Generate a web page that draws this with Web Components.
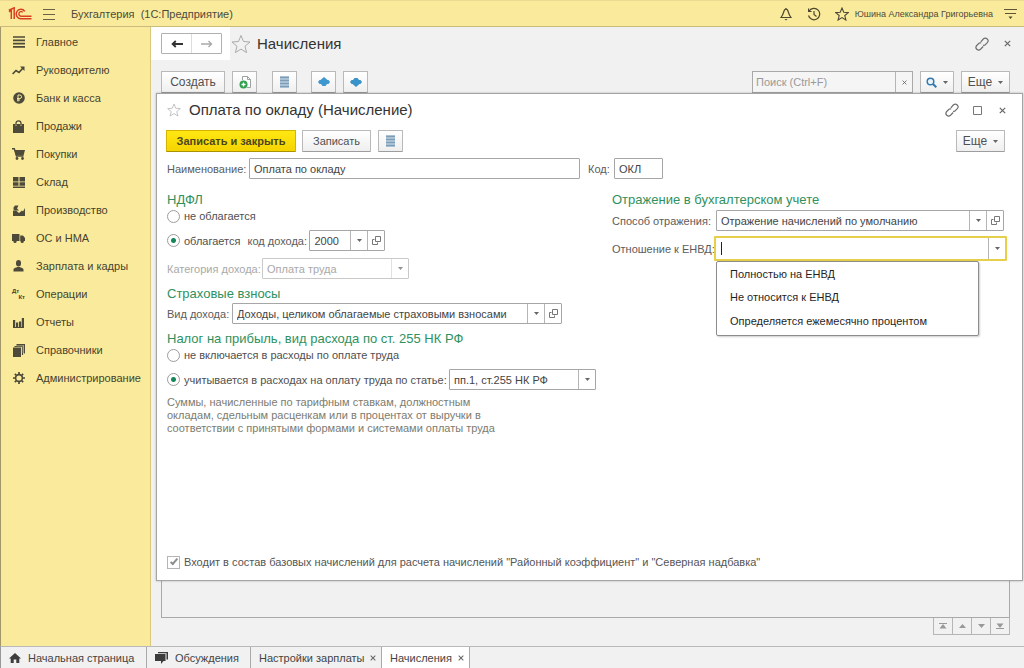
<!DOCTYPE html>
<html lang="ru">
<head>
<meta charset="utf-8">
<meta name="viewport" content="width=device-width, initial-scale=1">
<title>Бухгалтерия (1С:Предприятие)</title>
<style>
  body { margin: 0; font: 11px/16px "Liberation Sans", Arial, sans-serif; color: #4a4a4a; background: #f1f1f1; }
</style>
</head>
<body>
<app-shell></app-shell>

<script>
const RESET = `
  *, *::before, *::after { box-sizing: border-box; }
  :host { display: block; box-sizing: border-box; }
  :host([hidden]) { display: none; }
  button, input, select { font: inherit; color: inherit; margin: 0; padding: 0; border: 0; border-radius: 0; background: none; outline: none; appearance: none; }
  button { display: inline-flex; align-items: center; justify-content: center; cursor: pointer; }
  a { color: inherit; text-decoration: none; }
  ul { list-style: none; margin: 0; padding: 0; }
  h1, h2, p { margin: 0; font-weight: normal; }
`;

function define(name, css, html, ready) {
  customElements.define(name, class extends HTMLElement {
    connectedCallback() {
      if (this.shadowRoot) return;
      const root = this.attachShadow({ mode: 'open' });
      const markup = typeof html === 'function' ? html(this) : html;
      root.innerHTML = `<style>${RESET}${css}</style>${markup}`;
      if (ready) ready(root, this);
    }
  });
}

const ICONS = {
  logo: [24, 14, `<g fill="none" stroke="#d8401f"><path d="M1 4.800 3.300 3.200V12M.8 3.200 6.200.8V12" stroke-width="1.500"/><path d="M16.800 4.400A4.700 4.700 0 1 0 12.800 11.700H23.500" stroke-width="1.500"/><path d="M14.800 5.300A2.300 2.300 0 1 0 13 9.200H23.500" stroke-width="1.400"/></g>`],
  menu: [12, 11, `<path d="M0 .5h12M0 5.5h12M0 10.5h12" stroke="#6a6244"/>`],
  bell: [12, 14, `<path d="M6 1v1M1 10.500h10C9.500 8.500 9 7.500 8.300 5 7.800 3.200 7 2.200 6 2.200S4.200 3.200 3.700 5C3 7.500 2.500 8.500 1 10.500z" fill="none" stroke="#4d4730" stroke-width="1.200"/><path d="M4.500 12h3L6 13.500z" fill="#4d4730"/>`],
  history: [14, 14, `<path d="M2.200 4A5.700 5.700 0 1 1 1.500 8.500M1.600 1.500v3h3M7 4v3.500L9.500 9.500" fill="none" stroke="#4d4730" stroke-width="1.200"/>`],
  star: [20, 20, `<path d="M10 1.500 12.500 7.500 19 8 14 12.200 15.600 18.600 10 15.100 4.400 18.600 6 12.200 1 8 7.500 7.500z" fill="none" stroke="currentColor" stroke-width="var(--stroke, 1)"/>`],
  dropmenu: [13, 12, `<path d="M0 1.500h13M1 5.500h11" stroke="#5b5439"/><path d="M4.500 8.500h4L6.500 11z" fill="#4d4730"/>`],
  link: [14, 14, `<g fill="none" stroke="#6e6e6e" stroke-width="1.200"><path d="M5.800 4.800 8.300 2Q10.300.200 12.200 2T12.300 5.700L9.800 8.200 8 8.400"/><path d="M6.200 5.800 4.200 6 1.700 8.500Q0 10.500 1.800 12.200T5.500 12.200L8.200 9.500"/></g>`],
  close: [7, 7, `<path d="M.8.8 6.200 6.200M6.200.8.800 6.200" stroke="#666" stroke-width="1.200"/>`],
  square: [9, 9, `<path d="M.5.500h8v8h-8z" fill="none" stroke="#777"/>`],
  back: [12, 8, `<path d="M12 4H2M4.800 1 1.600 4l3.200 3" fill="none" stroke="#333" stroke-width="1.800"/>`],
  forward: [12, 8, `<path d="M0 4h10.500M7.500 1l3 3-3 3" fill="none" stroke="#aaa" stroke-width="1.400"/>`],
  list: [9, 12, `<path d="M0 0h9v12H0z" fill="#a9c1d3"/><path d="M0 1.500h9M0 4.500h9M0 7.500h9M0 10.500h9" stroke="#7b9db8"/>`],
  addcopy: [12, 13, `<path d="M3.500 4V.500h5l3 3v8H8" fill="#fff" stroke="#9aa39f"/><path d="M8.500.500v3h3" fill="none" stroke="#9aa39f"/><circle cx="4.500" cy="8.500" r="4" fill="#2fa04e"/><path d="M2.500 8.500h4M4.500 6.500v4" stroke="#fff" stroke-width="1.300"/>`],
  up: [12, 10, `<path d="M6 0 9.500 3H10.500L12 5 10.500 7H9L7.500 9h-3L3 7H1.500L0 5 1.500 3H2.500z" fill="#3f97cf"/>`],
  down: [12, 10, `<path d="M6 10 9.500 7H10.500L12 5 10.500 3H9L7.500 1h-3L3 3H1.500L0 5 1.500 7H2.500z" fill="#3a93c8"/>`],
  lens: [11, 11, `<circle cx="4.500" cy="4.500" r="3.300" fill="#eaf4fb" stroke="#3479b0" stroke-width="1.500"/><path d="M7 7l3.300 3.300" stroke="#3479b0" stroke-width="2"/>`],
  caret: [5, 3, `<path d="M0 0h5L2.500 3z" fill="#666"/>`],
  open: [9, 9, `<path d="M3.500.500h5v5h-5z" fill="none" stroke="#777"/><path d="M2.500 3.500h-2v5h5v-2" fill="none" stroke="#777"/>`],
  main: [12, 12, `<path d="M0 1h12M0 4.300h12M0 7.600h12M0 10.900h12" stroke="#4d4a3a" stroke-width="1.700"/>`],
  trend: [13, 9, `<path d="M.6 8 4 4.500l3 2L11 2" fill="none" stroke="#4d4a3a" stroke-width="1.700"/><path d="M8 .500h4.500V5z" fill="#4d4a3a"/>`],
  ruble: [12, 12, `<circle cx="6" cy="6" r="5.800" fill="#4d4a3a"/><path d="M5 9.500V3h1.800a1.700 1.700 0 0 1 0 3.500H4M4 8h3" fill="none" stroke="#faeb9c"/>`],
  bag: [11, 13, `<path d="M0 4h11v9H0z" fill="#4d4a3a"/><path d="M3 6V3.300a2.500 2.500 0 0 1 5 0V6" fill="none" stroke="#4d4a3a" stroke-width="1.300"/><path d="M3 4.500v1.500M8 4.500v1.500" stroke="#faeb9c" stroke-width=".8"/>`],
  cart: [13, 12, `<path d="M0 .800h2.300L4.500 8h7" fill="none" stroke="#4d4a3a" stroke-width="1.400"/><path d="M2.500 2H13l-1.500 5.500H4z" fill="#4d4a3a"/><circle cx="5" cy="10.500" r="1.400" fill="#4d4a3a"/><circle cx="10.500" cy="10.500" r="1.400" fill="#4d4a3a"/>`],
  store: [12, 11, `<path d="M0 0h5.500v4.500H0zM6.500 0H12v4.500H6.500zM0 5.300h5.500v3.500H0zM6.500 5.300H12v3.500H6.500zM0 9.600h12V11H0z" fill="#4d4a3a"/>`],
  factory: [12, 12, `<path d="M0 12V6.500H3L6 9 9 6.500 10 7.500 12 4V12z" fill="#4d4a3a"/><path d="M.5 5.500V3.500L2 1.500H5.500L4 4.500 6 6.500H2z" fill="#4d4a3a"/>`],
  truck: [13, 9, `<path d="M0 0h7.500v7H0zM8.200 1.500H11l2 2.500v3H8.200z" fill="#4d4a3a"/><circle cx="3" cy="7.400" r="1.600" fill="#4d4a3a"/><circle cx="10.200" cy="7.400" r="1.600" fill="#4d4a3a"/>`],
  person: [11, 12, `<ellipse cx="5.500" cy="3.300" rx="2.500" ry="3.200" fill="#4d4a3a"/><path d="M.5 11.500V9.500C.5 8 3.500 7.500 4.200 7h2.600c.7.500 3.700 1 3.700 2.500v2z" fill="#4d4a3a"/>`],
  chart: [11, 11, `<path d="M0 3h2.200v8H0zM3 5.500h2.200V11H3zM6 4.500h2.200V11H6zM8.800 1H11v10H8.800z" fill="#4d4a3a"/><path d="M0 10.500h11" stroke="#4d4a3a"/>`],
  books: [12, 13, `<path d="M0 3.500h8V13H0z" fill="#4d4a3a"/><path d="M1.500 2.500H9.500V11M3.500.700h8V9.500" fill="none" stroke="#4d4a3a" stroke-width="1.200"/><path d="M3.500 1h7v8h-1V2.500h-6z" fill="#8a8463"/>`],
  gear: [12, 12, `<circle cx="6" cy="6" r="3.400" fill="none" stroke="#4d4a3a" stroke-width="1.600"/><path d="M6 0v2.500M6 9.500V12M0 6h2.500M9.500 6H12M1.800 1.800l1.700 1.700M8.500 8.500l1.700 1.700M10.200 1.800 8.500 3.500M3.500 8.500 1.800 10.200" stroke="#4d4a3a" stroke-width="1.700"/>`],
  home: [12, 10, `<path d="M6 0 12 5.500H10.300V10H7.300V6.500H4.700V10H1.700V5.500H0z" fill="#3d3d3d"/>`],
  chat: [13, 12, `<path d="M3 0h10v7.500h-1.500V1.300H3z" fill="#3d3d3d"/><path d="M0 2h10.500v7H8.500L6 12V9H0z" fill="#3d3d3d"/>`],
  first: [8, 6, `<path d="M0 .500h8" stroke="#999"/><path d="M4 1 7.500 5.500H.500z" fill="#999"/>`],
  prev: [7, 4, `<path d="M3.500 0 7 4H0z" fill="#999"/>`],
  next: [7, 4, `<path d="M3.500 4 7 0H0z" fill="#999"/>`],
  last: [8, 6, `<path d="M0 5.500h8" stroke="#999"/><path d="M4 5 7.500.500H.500z" fill="#999"/>`]
};

define('ui-icon', `
  :host { display: inline-flex; flex: none; }
  svg { display: block; }
`, el => {
  const [w, h, body] = ICONS[el.getAttribute('name')];
  const size = Number(el.getAttribute('size')) || w;
  return `<svg width="${size}" height="${Math.round(h * size / w)}" viewBox="0 0 ${w} ${h}" aria-hidden="true">${body}</svg>`;
});

/* Plain icon button without a frame */
define('icon-button', `
  :host { display: inline-flex; }
  button { width: var(--w, 14px); height: 16px; }
`, el => `<button type="button" aria-label="${el.getAttribute('label')}"><slot></slot></button>`);

/* Framed button of a command bar */
define('tool-button', `
  :host { display: inline-flex; }
  button { height: 22px; min-width: 25px; width: 100%; padding: 0 var(--pad, 6px); gap: 6px; border: 1px solid #b9b9b9; border-bottom-color: #9d9d9d; border-radius: 1px;
    background: linear-gradient(#fff, #efefef); white-space: nowrap; color: #505050; }
  :host([primary]) button { background: linear-gradient(#ffe713, #f5d400); border-color: #d3b500; border-bottom-color: #a99100; font-weight: bold; color: #4d4620; }
`, el => `<button type="button" aria-label="${el.getAttribute('label') || el.textContent.trim()}"><slot></slot></button>`);

define('top-bar', `
  :host { display: flex; align-items: center; height: 27px; padding: 1px 7px 0 8px; background: #faeb9c; border-top: 1px solid #eadb90; border-bottom: 1px solid #c9bb7c; color: #4d4a3a; }
  h1 { font-size: 11px; line-height: 16px; margin-left: 15px; white-space: pre; flex: 1; }
  .menu { margin-left: 10px; }
  .tools { display: flex; align-items: center; gap: 14px; }
  .user { font-size: 9px; white-space: nowrap; margin: 0 -4px 0 -8px; }
`, `
  <ui-icon name="logo"></ui-icon>
  <icon-button class="menu" label="Меню"><ui-icon name="menu"></ui-icon></icon-button>
  <h1>Бухгалтерия  (1С:Предприятие)</h1>
  <div class="tools">
    <icon-button label="Уведомления"><ui-icon name="bell"></ui-icon></icon-button>
    <icon-button label="История"><ui-icon name="history"></ui-icon></icon-button>
    <icon-button label="Избранное" style="--stroke: 1.6"><ui-icon name="star" size="14"></ui-icon></icon-button>
    <a class="user" href="#user">Юшина Александра Григорьевна</a>
    <icon-button label="Настройки"><ui-icon name="dropmenu"></ui-icon></icon-button>
  </div>
`);

define('nav-item', `
  a { display: flex; align-items: center; height: 28px; padding-left: 11px; white-space: nowrap; }
  .mark { width: 13px; margin-right: 11px; display: flex; justify-content: center; }
  .entry { display: grid; font-size: 6px; line-height: 6px; font-weight: bold; width: 100%; }
  .entry span:last-child { justify-self: end; }
`, el => {
  const icon = el.getAttribute('icon');
  const mark = icon === 'entry' ? '<span class="entry"><span>Дт</span><span>Кт</span></span>' : `<ui-icon name="${icon}"></ui-icon>`;
  return `<a href="#"><span class="mark">${mark}</span><slot></slot></a>`;
});

define('side-nav', `
  :host { background: #faeb9c; border-left: 1px solid #a2986a; border-right: 1px solid #d9c97f; padding-top: 1px; color: #47432f; }
`, `
  <nav aria-label="Разделы">
    <nav-item icon="main">Главное</nav-item>
    <nav-item icon="trend">Руководителю</nav-item>
    <nav-item icon="ruble">Банк и касса</nav-item>
    <nav-item icon="bag">Продажи</nav-item>
    <nav-item icon="cart">Покупки</nav-item>
    <nav-item icon="store">Склад</nav-item>
    <nav-item icon="factory">Производство</nav-item>
    <nav-item icon="truck">ОС и НМА</nav-item>
    <nav-item icon="person">Зарплата и кадры</nav-item>
    <nav-item icon="entry">Операции</nav-item>
    <nav-item icon="chart">Отчеты</nav-item>
    <nav-item icon="books">Справочники</nav-item>
    <nav-item icon="gear">Администрирование</nav-item>
  </nav>
`);

/* Field with a label; kind = text | select | combo */
define('form-field', `
  :host { display: flex; align-items: center; height: 21px; }
  label { flex: none; min-width: var(--label, 0); white-space: nowrap; color: #5c5c5c; }
  .box { flex: 1; min-width: 0; display: flex; height: 21px; border: 1px solid #a6a6a6; border-radius: 1px; background: #fff; color: #444; }
  .value { flex: 1; min-width: 0; display: grid; grid-template-columns: 1fr 17px; }
  input, select { width: 100%; min-width: 0; height: 100%; padding: 0 4px; text-overflow: ellipsis; }
  select { grid-area: 1 / 1 / 2 / 3; padding-right: 17px; opacity: 1; }
  .arrow { grid-area: 1 / 2; display: flex; align-items: center; justify-content: center; border-left: 1px solid #b5b5b5; pointer-events: none; }
  button.arrow { pointer-events: auto; }
  .open { width: 17px; border-left: 1px solid #b5b5b5; }
  :host([disabled]) label, :host([disabled]) .box { color: #a9a9a9; }
  :host([disabled]) .box { border-color: #c9c9c9; }
  :host([disabled]) .arrow { border-color: #d5d5d5; opacity: .7; }
  :host([kind=combo]) { position: relative; height: 25px; }
  :host([kind=combo]) .box { height: 25px; border: 2px solid #e6d04a; margin: 0 -2px; }
  :host([kind=combo]) input { caret-color: transparent; background: linear-gradient(#222, #222) 5px 50% / 1px 13px no-repeat; }
  .options { position: absolute; z-index: 2; top: 25px; left: var(--label, 0); right: 26px; border: 1px solid #8c8c8c; border-radius: 2px; background: #fff; box-shadow: 1px 1px 2px #0003; color: #1f1f1f; padding: 1px 0 2px; }
  .options li { height: 23px; line-height: 23px; padding-left: 13px; white-space: nowrap; }
  .options li:nth-child(2) { height: 24px; }
`, el => {
  const kind = el.getAttribute('kind') || 'text';
  const value = el.getAttribute('value') || '';
  const off = el.hasAttribute('disabled') ? 'disabled' : '';
  const options = [...el.querySelectorAll('data')].map(d => d.textContent);
  const label = el.getAttribute('label');
  const name = label ? '' : 'aria-label="Статья расходов"';
  let inner;
  if (kind === 'text') inner = `<input id="f" type="text" value="${value}">`;
  if (kind === 'select') inner = `<div class="value"><select id="f" ${name} ${off}><option>${value}</option></select><span class="arrow"><ui-icon name="caret"></ui-icon></span></div>`;
  if (kind === 'combo') inner = `<div class="value"><input id="f" type="text" role="combobox" aria-expanded="true" aria-controls="o"><button class="arrow" type="button" aria-label="Выбрать"><ui-icon name="caret"></ui-icon></button></div>`;
  return `${label ? `<label for="f">${label}</label>` : ''}
    <div class="box">${inner}${el.hasAttribute('open') ? '<button class="open" type="button" aria-label="Открыть"><ui-icon name="open"></ui-icon></button>' : ''}</div>
    ${options.length ? `<ul class="options" id="o" role="listbox">${options.map(o => `<li role="option">${o}</li>`).join('')}</ul>` : ''}`;
});

define('section-title', `
  :host { height: 17px; color: #2f9160; }
  h2 { font-size: 13px; line-height: 18px; white-space: nowrap; }
`, `<h2><slot></slot></h2>`);

define('charge-form', `
  :host { display: flex; flex-direction: column; flex: 1; min-height: 0; }
  .name { display: flex; align-items: center; }
  .title { width: 413px; --label: 82px; }
  .code { width: 75px; --label: 26px; margin-left: 8px; }
  .columns { display: grid; grid-template-columns: 445px minmax(0, 1fr); margin-top: 12px; flex: 1; align-content: start; }
  .option { display: flex; align-items: center; height: 16px; white-space: nowrap; color: #4f4f4f; }
  .field-row { height: 21px; margin-top: 6px; }
  input[type=radio] { flex: none; width: 13px; height: 13px; margin-right: 4px; border: 1px solid #9c9c9c; border-radius: 50%; background: #fff; }
  input[type=radio]:checked { background: radial-gradient(circle, #15875a 2px, #fff 3px); }
  .income { width: 138px; --label: 62px; margin-left: 7px; }
  .category { width: 242px; --label: 95px; margin: 7px 0 6px; }
  .kind { width: 395px; --label: 65px; margin: 1px 0 6px; }
  .article { flex: none; width: 147px; margin-left: auto; }
  .expense { width: 429px; }
  .hint { color: #7c7c70; line-height: 13px; margin-top: 6px; }
  .method { --label: 104px; margin: 2px 4px 5px 0; }
  .envd { --label: 104px; margin-right: 3px; }
  .base { margin-bottom: 10px; color: #555; }
  input[type=checkbox] { flex: none; width: 13px; height: 13px; margin-right: 4px; border: 1px solid #b5b5b5; display: grid; place-items: center; }
  input[type=checkbox]:checked::before { content: ""; width: 4px; height: 8px; border: solid #8d8d8d; border-width: 0 2px 2px 0; transform: rotate(40deg); margin-top: -2px; }
`, `
  <div class="name">
    <form-field class="title" label="Наименование:" value="Оплата по окладу"></form-field>
    <form-field class="code" label="Код:" value="ОКЛ"></form-field>
  </div>
  <div class="columns">
    <div>
      <section-title>НДФЛ</section-title>
      <div class="option"><input type="radio" name="tax" id="t0"><label for="t0">не облагается</label></div>
      <div class="option field-row"><input type="radio" name="tax" id="t1" checked><label for="t1">облагается</label>
        <form-field class="income" kind="select" label="код дохода:" value="2000" open></form-field></div>
      <form-field class="category" kind="select" label="Категория дохода:" value="Оплата труда" disabled></form-field>
      <section-title>Страховые взносы</section-title>
      <form-field class="kind" kind="select" label="Вид дохода:" value="Доходы, целиком облагаемые страховыми взносами" open></form-field>
      <section-title>Налог на прибыль, вид расхода по ст. 255 НК РФ</section-title>
      <div class="option"><input type="radio" name="exp" id="e0"><label for="e0">не включается в расходы по оплате труда</label></div>
      <div class="option field-row expense"><input type="radio" name="exp" id="e1" checked><label for="e1">учитывается в расходах на оплату труда по статье:</label>
        <form-field class="article" kind="select" value="пп.1, ст.255 НК РФ"></form-field></div>
      <p class="hint">Суммы, начисленные по тарифным ставкам, должностным<br>окладам, сдельным расценкам или в процентах от выручки в<br>соответствии с принятыми формами и системами оплаты труда</p>
    </div>
    <div>
      <section-title>Отражение в бухгалтерском учете</section-title>
      <form-field class="method" kind="select" label="Способ отражения:" value="Отражение начислений по умолчанию" open></form-field>
      <form-field class="envd" kind="combo" label="Отношение к ЕНВД:">
        <data>Полностью на ЕНВД</data><data>Не относится к ЕНВД</data><data>Определяется ежемесячно процентом</data>
      </form-field>
    </div>
  </div>
  <div class="option base"><input type="checkbox" id="b" checked><label for="b">Входит в состав базовых начислений для расчета начислений "Районный коэффициент" и "Северная надбавка"</label></div>
`);

define('charge-window', `
  :host { display: flex; flex-direction: column; background: #fff; border: 1px solid #a5a5a5; box-shadow: 0 0 2px #0004; padding: 5px 14px 0 10px; }
  header { display: flex; align-items: center; height: 22px; margin-right: -1px; color: #aaa; }
  h2 { flex: 1; margin-left: 8px; font-size: 15px; line-height: 22px; color: #333; white-space: nowrap; }
  .wins { display: flex; gap: 11px; }
  .bar { display: flex; gap: 7px; margin: 9px 3px 6px -1px; }
  .save { width: 130px; } .write { width: 69px; margin-left: -1px; }
  .more { margin-left: auto; width: 49px; font-size: 12px; }
`, `
  <header>
    <icon-button label="В избранное"><ui-icon name="star" size="14"></ui-icon></icon-button>
    <h2>Оплата по окладу (Начисление)</h2>
    <div class="wins">
      <icon-button label="Ссылка"><ui-icon name="link"></ui-icon></icon-button>
      <icon-button label="Развернуть"><ui-icon name="square"></ui-icon></icon-button>
      <icon-button label="Закрыть"><ui-icon name="close"></ui-icon></icon-button>
    </div>
  </header>
  <div class="bar">
    <tool-button primary class="save">Записать и закрыть</tool-button>
    <tool-button class="write">Записать</tool-button>
    <tool-button label="Список"><ui-icon name="list"></ui-icon></tool-button>
    <tool-button class="more">Еще <ui-icon name="caret"></ui-icon></tool-button>
  </div>
  <charge-form></charge-form>
`);

define('charges-page', `
  :host { position: relative; display: flex; flex-direction: column; padding: 0 14px 11px 10px; min-height: 0; background: #f1f1f1; }
  header { display: flex; align-items: center; height: 33px; }
  .history { display: flex; height: 33px; padding: 6px 8px 6px 10px; margin-left: -10px; background: #fff; }
  .pair { display: flex; border: 1px solid #b0b0b0; background: #fff; border-radius: 1px; }
  .pair icon-button { --w: 29px; align-items: center; }
  .pair icon-button + icon-button { border-left: 1px solid #ddd; }
  .fav { color: #aaa; --w: 20px; margin-left: 1px; }
  h2 { flex: 1; margin-left: 6px; font-size: 15px; line-height: 22px; color: #333; }
  .wins { display: flex; gap: 11px; margin-right: -4px; }
  .bar { display: flex; align-items: center; margin-top: 11px; --pad: 5px; font-size: 12px; }
  .create { width: 64px; margin-right: 7px; }
  .search { display: flex; margin-left: auto; width: 161px; height: 22px; border: 1px solid #a9a9a9; font-size: 11px; background: #f5f5f5; }
  .search input { flex: 1; min-width: 0; padding: 0 3px; }
  .search input::placeholder { color: #999; opacity: 1; }
  .search button { width: 17px; border-left: 1px solid #b5b5b5; }
  .find { width: 34px; margin: 0 7px; }
  .more { width: 49px; }
  .list { flex: 1; margin-top: 1px; border: 1px solid #a9a9a9; }
  .pager { align-self: flex-end; display: flex; border: 1px solid #b5b5b5; border-top: 0; }
  .pager icon-button { --w: 18px; }
  .pager icon-button + icon-button { border-left: 1px solid #b5b5b5; }
  charge-window { position: absolute; inset: 66px 1px 65px 5px; }
`, `
  <header>
    <div class="history"><div class="pair">
      <icon-button label="Назад"><ui-icon name="back"></ui-icon></icon-button>
      <icon-button label="Вперед"><ui-icon name="forward"></ui-icon></icon-button>
    </div></div>
    <icon-button class="fav" label="В избранное"><ui-icon name="star"></ui-icon></icon-button>
    <h2>Начисления</h2>
    <div class="wins">
      <icon-button label="Ссылка"><ui-icon name="link"></ui-icon></icon-button>
      <icon-button label="Закрыть"><ui-icon name="close"></ui-icon></icon-button>
    </div>
  </header>
  <div class="bar">
    <tool-button class="create">Создать</tool-button>
    <tool-button label="Скопировать"><ui-icon name="addcopy"></ui-icon></tool-button>
    <tool-button label="Список" style="margin: 0 14px 0 15px"><ui-icon name="list"></ui-icon></tool-button>
    <tool-button label="Вверх" style="margin-right: 7px"><ui-icon name="up"></ui-icon></tool-button>
    <tool-button label="Вниз"><ui-icon name="down"></ui-icon></tool-button>
    <div class="search"><input type="text" placeholder="Поиск (Ctrl+F)" aria-label="Поиск"><button type="button" aria-label="Очистить"><ui-icon name="close" size="5"></ui-icon></button></div>
    <tool-button class="find" label="Найти"><ui-icon name="lens"></ui-icon><ui-icon name="caret"></ui-icon></tool-button>
    <tool-button class="more">Еще <ui-icon name="caret"></ui-icon></tool-button>
  </div>
  <div class="list"></div>
  <div class="pager">
    <icon-button label="В начало"><ui-icon name="first"></ui-icon></icon-button>
    <icon-button label="Выше"><ui-icon name="prev"></ui-icon></icon-button>
    <icon-button label="Ниже"><ui-icon name="next"></ui-icon></icon-button>
    <icon-button label="В конец"><ui-icon name="last"></ui-icon></icon-button>
  </div>
  <charge-window></charge-window>
`);

define('tab-item', `
  :host { display: flex; align-items: center; gap: 6px; padding: 0 8px; border-right: 1px solid #a9a9a9; white-space: nowrap; }
  :host([current]) { background: #fff; }
  a { display: flex; align-items: center; gap: 7px; flex: 1; }
  button { width: 7px; height: 16px; }
`, el => `<a href="#">${el.hasAttribute('icon') ? `<ui-icon name="${el.getAttribute('icon')}"></ui-icon>` : ''}<slot></slot></a>${
  el.hasAttribute('closable') ? '<button type="button" aria-label="Закрыть"><ui-icon name="close" size="6"></ui-icon></button>' : ''}`);

define('tab-strip', `
  :host { display: flex; height: 22px; background: #f1f1f1; border-top: 1px solid #b9b9b9; border-left: 1px solid #999; color: #444; }
`, `
  <tab-item icon="home" style="width: 146px">Начальная страница</tab-item>
  <tab-item icon="chat" style="width: 104px">Обсуждения</tab-item>
  <tab-item closable style="width: 131px">Настройки зарплаты</tab-item>
  <tab-item closable current style="width: 88px">Начисления</tab-item>
`);

define('app-shell', `
  :host { display: grid; grid-template: auto minmax(0, 1fr) auto / 151px minmax(0, 1fr); height: 100vh; min-height: 560px; }
  top-bar, tab-strip { grid-column: 1 / -1; }
`, `
  <top-bar></top-bar>
  <side-nav></side-nav>
  <charges-page></charges-page>
  <tab-strip></tab-strip>
`);
</script>
</body>
</html>
